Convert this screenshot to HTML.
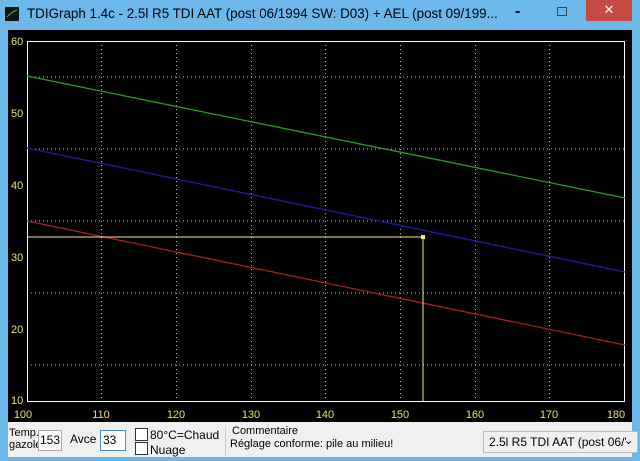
<!DOCTYPE html>
<html><head><style>
body{margin:0;width:640px;height:461px;background:#6cb8ea;font-family:"Liberation Sans",sans-serif;overflow:hidden;position:relative}
.t{position:absolute;left:27px;top:6px;font-size:13.4px;color:#000;white-space:nowrap}
.p{position:absolute;left:8px;top:422px;width:624px;height:35px;background:#f0f0f0}
.s{position:absolute;font-size:11px;color:#000;white-space:nowrap}
.box{position:absolute;background:#fff;border:1px solid #aaa}
</style></head><body>
<svg style="position:absolute;left:5px;top:5px" width="16" height="18"><rect x="0" y="2" width="14" height="14" fill="#111"/><path d="M2 12 L6 8 L12 5" stroke="#3c3" fill="none"/></svg>
<div class="t">TDIGraph 1.4c - 2.5l R5 TDI AAT (post 06/1994 SW: D03) + AEL (post 09/199...</div>
<div style="position:absolute;left:515px;top:3px;font-size:16px;font-weight:bold">-</div>
<div style="position:absolute;left:557px;top:7px;width:8px;height:7px;border:1px solid #444"></div>
<div style="position:absolute;left:586px;top:0;width:46px;height:21px;background:#c74a42;color:#fff;text-align:center;font-size:13px;line-height:20px">✕</div>
<svg style="position:absolute;left:8px;top:30px" width="624" height="392">
<rect width="624" height="392" fill="#000"/>
<g stroke="#bbb" stroke-dasharray="1,3" stroke-width="1">
<line x1="19" y1="47" x2="617" y2="47"/><line x1="19" y1="119" x2="617" y2="119"/><line x1="19" y1="191" x2="617" y2="191"/><line x1="19" y1="263" x2="617" y2="263"/><line x1="19" y1="335" x2="617" y2="335"/>
<line x1="93.5" y1="11" x2="93.5" y2="371"/><line x1="168.5" y1="11" x2="168.5" y2="371"/><line x1="243.5" y1="11" x2="243.5" y2="371"/><line x1="317.5" y1="11" x2="317.5" y2="371"/><line x1="392.5" y1="11" x2="392.5" y2="371"/><line x1="467.5" y1="11" x2="467.5" y2="371"/><line x1="541.5" y1="11" x2="541.5" y2="371"/>
</g>
<rect x="19.5" y="11.5" width="597" height="360" fill="none" stroke="#fff"/>
<line x1="19" y1="46" x2="617" y2="168" stroke="#2a9a2a" stroke-width="1.3"/>
<line x1="19" y1="118" x2="617" y2="242" stroke="#1c1caa" stroke-width="1.3"/>
<line x1="19" y1="191" x2="617" y2="315" stroke="#a82020" stroke-width="1.3"/>
<polyline points="19,207 415,207 415,371" fill="none" stroke="#f0f070"/>
<rect x="413" y="205" width="4" height="4" fill="#f0f070"/>
<g fill="#e8e070" font-size="11" font-family="Liberation Sans">
<text x="3" y="15">60</text><text x="3" y="87">50</text><text x="3" y="159">40</text><text x="3" y="231">30</text><text x="3" y="303">20</text><text x="3" y="374">10</text>
<g text-anchor="middle"><text x="15" y="388">100</text><text x="93" y="388">110</text><text x="168" y="388">120</text><text x="243" y="388">130</text><text x="317" y="388">140</text><text x="392" y="388">150</text><text x="467" y="388">160</text><text x="541" y="388">170</text><text x="608" y="388">180</text></g>
</g>
</svg>
<div class="p"></div>
<div class="s" style="left:9px;top:427px;line-height:12px">Temp.<br>gazole</div>
<div class="box" style="left:38px;top:430px;width:22px;height:19px"></div>
<div class="s" style="left:40px;top:433px;font-size:12px">153</div>
<div class="s" style="left:70px;top:432px;font-size:12px">Avce</div>
<div class="box" style="left:100px;top:430px;width:24px;height:19px;border-color:#4a8ad0"></div>
<div class="s" style="left:103px;top:433px;font-size:12px">33</div>
<div class="box" style="left:135px;top:428px;width:11px;height:11px;border-color:#333"></div>
<div class="s" style="left:150px;top:428px;font-size:12px">80°C=Chaud</div>
<div class="box" style="left:135px;top:442px;width:11px;height:11px;border-color:#333"></div>
<div class="s" style="left:150px;top:443px;font-size:12px">Nuage</div>
<div style="position:absolute;left:225px;top:428px;width:1px;height:27px;background:#ccc"></div>
<div class="s" style="left:232px;top:425px">Commentaire</div>
<div class="s" style="left:230px;top:438px">Réglage conforme: pile au milieu!</div>
<div class="box" style="left:483px;top:431px;width:153px;height:20px;background:#f0f0f0;border-color:#bbb"></div>
<div class="s" style="left:489px;top:435px;font-size:12px">2.5l R5 TDI AAT (post 06/'</div>
<div class="s" style="left:624px;top:434px;font-size:11px">⌄</div>
</body></html>
